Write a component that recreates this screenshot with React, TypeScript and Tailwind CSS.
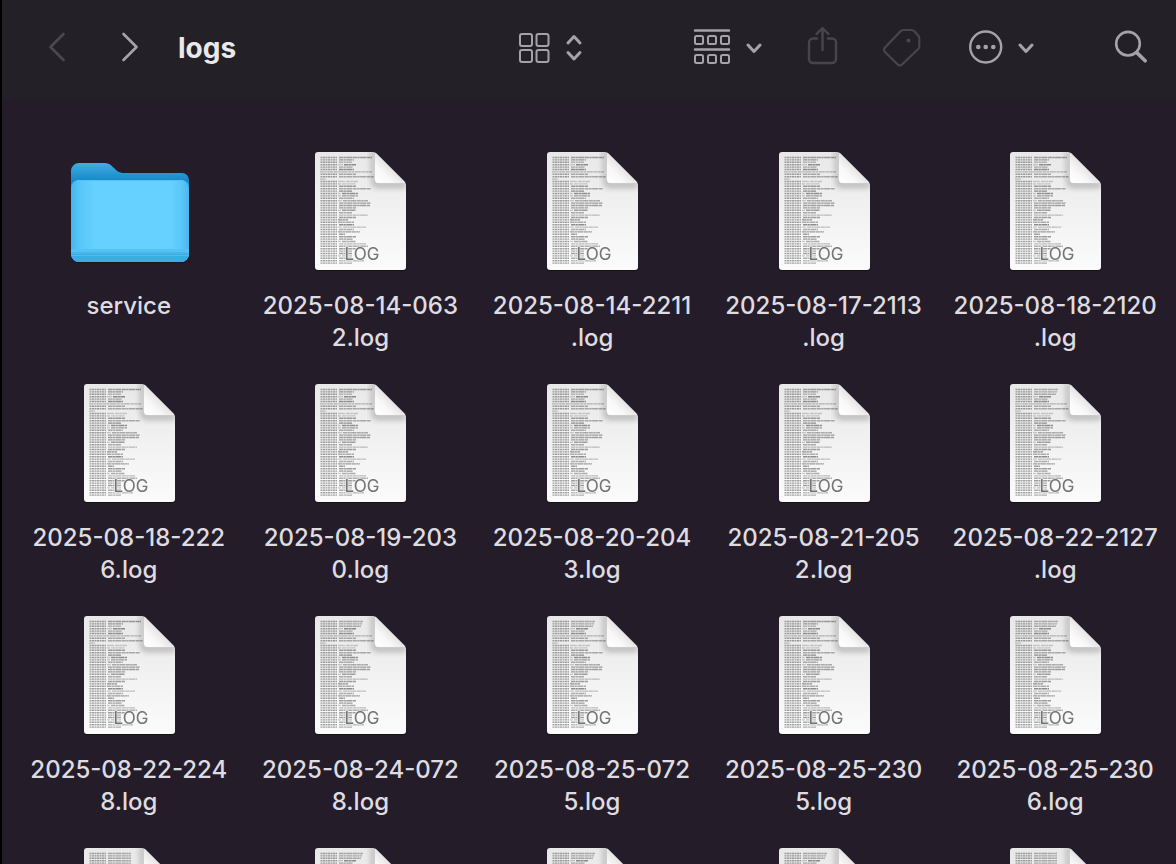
type LogLine = [kind: "stamp" | "wrap", from: number, to: number, tone: number];
type Preview = "default" | "dense" | "block";

interface Entry {
  lines?: string[];
  kind: "folder" | "log";
  preview?: Preview;
}

const entries: Entry[] = [
  { kind: "folder", lines: ["service"] },
  { kind: "log", lines: ["2025-08-14-063", "2.log"] },
  { kind: "log", lines: ["2025-08-14-2211", ".log"] },
  { kind: "log", lines: ["2025-08-17-2113", ".log"] },
  { kind: "log", lines: ["2025-08-18-2120", ".log"] },
  { kind: "log", lines: ["2025-08-18-222", "6.log"] },
  { kind: "log", lines: ["2025-08-19-203", "0.log"] },
  { kind: "log", lines: ["2025-08-20-204", "3.log"] },
  { kind: "log", lines: ["2025-08-21-205", "2.log"] },
  { kind: "log", lines: ["2025-08-22-2127", ".log"], preview: "dense" },
  { kind: "log", lines: ["2025-08-22-224", "8.log"] },
  { kind: "log", lines: ["2025-08-24-072", "8.log"], preview: "dense" },
  { kind: "log", lines: ["2025-08-25-072", "5.log"], preview: "dense" },
  { kind: "log", lines: ["2025-08-25-230", "5.log"] },
  { kind: "log", lines: ["2025-08-25-230", "6.log"], preview: "dense" },
  { kind: "log", preview: "block" },
  { kind: "log", preview: "dense" },
  { kind: "log", preview: "dense" },
  { kind: "log", preview: "dense" },
  { kind: "log", preview: "block" },
];

// One entry per printed line: where the message starts and ends, and how dark it is
const base: LogLine[] = [
  ["stamp", 43, 76, 0.6], ["stamp", 43, 58, 0.6], ["stamp", 43, 56, 0.4], ["stamp", 48, 60, 0.7], ["stamp", 43, 57, 0.5],
  ["stamp", 43, 58, 0.7], ["wrap", 24, 76, 0.4], ["stamp", 43, 60, 0.5], ["stamp", 43, 78, 0.5], ["wrap", 24, 30, 0.4],
  ["stamp", 50, 62, 0.3], ["stamp", 46, 60, 0.3], ["stamp", 43, 60, 0.6], ["stamp", 43, 75, 0.5], ["stamp", 43, 56, 0.7],
  ["stamp", 46, 62, 0.7], ["stamp", 46, 62, 0.6], ["stamp", 43, 58, 0.5], ["stamp", 47, 72, 0.5], ["stamp", 43, 75, 0.6],
  ["stamp", 43, 74, 0.6], ["stamp", 43, 60, 0.6], ["stamp", 46, 60, 0.6], ["stamp", 43, 56, 0.5], ["stamp", 43, 72, 0.4],
  ["stamp", 43, 60, 0.6], ["stamp", 42, 52, 0.7], ["stamp", 42, 58, 0.5], ["stamp", 43, 58, 0.7], ["stamp", 47, 70, 0.4],
  ["stamp", 43, 58, 0.5], ["stamp", 42, 64, 0.6], ["stamp", 43, 49, 0.6], ["stamp", 43, 60, 0.6], ["stamp", 43, 57, 0.6],
  ["stamp", 46, 60, 0.5], ["stamp", 43, 70, 0.4], ["stamp", 43, 72, 0.5], ["stamp", 43, 60, 0.6], ["stamp", 43, 56, 0.5],
  ["stamp", 43, 56, 0.6], ["stamp", 46, 56, 0.4], ["stamp", 43, 56, 0.5], ["stamp", 43, 68, 0.4], ["stamp", 43, 56, 0.5],
];

const previews: Record<Preview, LogLine[]> = {
  default: base,
  dense: base.map((l, i): LogLine => (i < 3 ? ["stamp", 43, 67 - i, 0.5] : l)),
  block: base.map((l, i): LogLine => (i < 8 ? ["stamp", 43, 66, 0.5] : l)),
};

function SharedGradients() {
  return (
    <svg width="0" height="0" className="absolute" aria-hidden="true">
      <defs>
        <linearGradient id="page" x1="0" y1="0" x2="0" y2="1">
          <stop offset="0" stopColor="#e8e8e8" />
          <stop offset="1" stopColor="#fbfbfb" />
        </linearGradient>
        <linearGradient id="fold" gradientUnits="userSpaceOnUse" x1="80" y1="36" x2="96" y2="20">
          <stop offset="0" stopColor="#ffffff" />
          <stop offset="0.5" stopColor="#f8f8f8" />
          <stop offset="1" stopColor="#e0e0e0" />
        </linearGradient>
        <filter id="foldShadow" x="-50%" y="-50%" width="200%" height="200%">
          <feGaussianBlur stdDeviation="3" />
        </filter>
        <clipPath id="pageClip">
          <path d="M22 6H77Q79 6 80.500 7.500L108.500 35.500Q110 37 110 39V121a3 3 0 0 1-3 3H22a3 3 0 0 1-3-3V9a3 3 0 0 1 3-3z" />
        </clipPath>
        <linearGradient id="folderBack" x1="0" y1="0" x2="0" y2="1">
          <stop offset="0" stopColor="#41ade2" />
          <stop offset="0.18" stopColor="#1789c9" />
          <stop offset="1" stopColor="#1789c9" />
        </linearGradient>
        <linearGradient id="folderSide">
          <stop offset="0" stopColor="#45b7ec" />
          <stop offset="0.09" stopColor="#5bc8f9" />
          <stop offset="0.2" stopColor="#66d0ff" />
          <stop offset="0.85" stopColor="#66d0ff" />
          <stop offset="0.94" stopColor="#5ac6f7" />
          <stop offset="1" stopColor="#45b7ec" />
        </linearGradient>
      </defs>
    </svg>
  );
}

function LogIcon({ preview = "default", badge }: { preview?: Preview; badge: boolean }) {
  return (
    <svg viewBox="0 0 128 128" className="h-32 w-32 shrink-0" aria-hidden="true">
      <path d="M22 7H79L110 38V122a3 3 0 0 1-3 3H22a3 3 0 0 1-3-3V10a3 3 0 0 1 3-3z" fill="#000" opacity="0.4" />
      <g clipPath="url(#pageClip)">
        <rect x="19" y="6" width="91" height="118" fill="url(#page)" />
        {previews[preview].map(([kind, from, to, tone], i) => {
          const y = 11.5 + i * 2.4;
          return (
            <g key={i} stroke="#4a4a4a" strokeWidth="1.4">
              {kind === "stamp" && <path d={`M24.5 ${y}H41`} strokeDasharray="2 .5" opacity="0.5" />}
              {kind === "stamp" && from > 44 && <path d={`M42 ${y}H${from - 1}`} opacity="0.25" />}
              <path d={`M${from} ${y}H${to}`} strokeDasharray="4 .4 2.5 .4 6 .5" opacity={tone * 0.85} />
            </g>
          );
        })}
        <path d="M79 2V34a3 3 0 0 0 3 3H114L108 41H81a5 5 0 0 1-5-5V2z" fill="#000" opacity="0.35" filter="url(#foldShadow)" />
        <path d="M79 6V33.500a3.500 3.500 0 0 0 3.500 3.500H110z" fill="url(#fold)" />
      </g>
      {badge && (
        <text x="66" y="114" textAnchor="middle" fontSize="17" fill="#6e6e6e" opacity="0.95" stroke="#f4f4f4" strokeWidth="1" paintOrder="stroke">
          LOG
        </text>
      )}
    </svg>
  );
}

function FolderIcon() {
  return (
    <svg viewBox="0 0 128 128" className="h-32 w-32 shrink-0" aria-hidden="true">
      <path d="M13 19H39c8 0 11 9 19 9H118a7 7 0 0 1 7 7V110a7 7 0 0 1-7 7H13a7 7 0 0 1-7-7V24a7 7 0 0 1 7-7z" fill="#000" opacity="0.3" />
      <path d="M14 17H40c8 0 10 10 18 10H117a7 7 0 0 1 7 7V108a7 7 0 0 1-7 7H14a8 8 0 0 1-8-8V25a8 8 0 0 1 8-8z" fill="url(#folderBack)" />
      <path d="M14 34H116a8 8 0 0 1 8 8V108a8 8 0 0 1-8 8H14a8 8 0 0 1-8-8V42a8 8 0 0 1 8-8z" fill="url(#folderSide)" />
      <path d="M6 103H124v3H6z" fill="#56c2f4" />
      <path d="M6 106H124v2a8 8 0 0 1-8 8H14a8 8 0 0 1-8-8z" fill="#3aaee4" />
      <path d="M6 106H124v2H6z" fill="#47b7eb" />
      <path d="M6.500 109.500H123.500" stroke="#4fbcee" strokeWidth="1" />
      <path d="M12 34.500H118" stroke="#58c2f2" strokeWidth="1" />
    </svg>
  );
}

function FileItem({ entry }: { entry: Entry }) {
  return (
    <li className="flex h-[232px] flex-col items-center gap-4">
      {entry.kind === "folder" ? <FolderIcon /> : <LogIcon preview={entry.preview} badge={!!entry.lines} />}
      {entry.lines && (
        <p className="text-center text-2xl/8 font-medium whitespace-nowrap text-[#dedce0]">
          {entry.lines.map((line) => (
            <span key={line} className="block">{line}</span>
          ))}
        </p>
      )}
    </li>
  );
}

const stroked = { fill: "none", stroke: "currentColor", strokeLinecap: "round", strokeLinejoin: "round", height: 48 } as const;

function Toolbar() {
  return (
    <header className="flex h-[99px] shrink-0 items-start bg-[#232127] pt-6 pr-7 pl-10 text-[#a6a2aa]">
      <button aria-label="Back" className="text-[#4b484f]" disabled>
        <svg {...stroked} width="32" strokeWidth="2.6"><path d="M21.500 10L8.500 23L21.500 36" /></svg>
      </button>
      <button aria-label="Forward" className="ml-10">
        <svg {...stroked} width="32" strokeWidth="2.6"><path d="M9.500 10L22.500 23L9.500 36" /></svg>
      </button>
      <h1 className="ml-8 flex-1 text-[28px]/12 font-bold text-[#e9e8ea]">logs</h1>

      <button aria-label="View as icons">
        <svg {...stroked} width="66" strokeWidth="2">
          <rect x="2" y="10" width="12" height="12" rx="2" />
          <rect x="18.500" y="10" width="12" height="12" rx="2" />
          <rect x="2" y="26" width="12" height="12" rx="2" />
          <rect x="18.500" y="26" width="12" height="12" rx="2" />
          <path d="M50 19L56 12.500L62 19M50 28.500L56 35L62 28.500" strokeWidth="3" />
        </svg>
      </button>
      <button aria-label="Group items" className="ml-27">
        <svg {...stroked} width="70" strokeWidth="2">
          <path d="M3 6.500H37M3 25.500H37" strokeWidth="2.6" />
          {[12, 31].map((y) =>
            [3, 16, 29].map((x) => <rect key={`${x}-${y}`} x={x} y={y} width="8" height="8" rx="1.5" />)
          )}
          <path d="M56 21L62 27.500L68 21" strokeWidth="3" />
        </svg>
      </button>
      <button aria-label="Share" className="ml-11 text-[#48454c]" disabled>
        <svg {...stroked} width="32" strokeWidth="2.4">
          <path d="M11 14.500H7a4 4 0 0 0-4 4V35a4 4 0 0 0 4 4H26a4 4 0 0 0 4-4V18.500a4 4 0 0 0-4-4H22" />
          <path d="M16.500 26V4.500M10.500 10L16.500 4.200L22.500 10" />
        </svg>
      </button>
      <button aria-label="Tags" className="ml-11 text-[#48454c]" disabled>
        <svg {...stroked} width="40" strokeWidth="2.2">
          <path d="M21.500 6H29Q31 6 32.300 7.300L36.200 11.500Q37.300 12.800 37.300 14.500V22Q37.300 24 36 25.300L20 40.500Q17.800 42.500 15.700 40.500L3 28Q1 25.800 3 23.600L18.500 7.300Q19.800 6 21.500 6z" />
          <circle cx="26.500" cy="16.500" r="2" fill="currentColor" stroke="none" />
        </svg>
      </button>
      <button aria-label="More actions" className="ml-11">
        <svg {...stroked} width="68" strokeWidth="2.4">
          <circle cx="19.700" cy="23" r="15.500" />
          <g fill="currentColor" stroke="none">
            <circle cx="12.300" cy="23" r="2.300" />
            <circle cx="19.700" cy="23" r="2.300" />
            <circle cx="27.300" cy="23" r="2.300" />
          </g>
          <path d="M54 21L60 27.500L66 21" strokeWidth="3" />
        </svg>
      </button>
      <button aria-label="Search" className="ml-20">
        <svg {...stroked} width="34" strokeWidth="2.600">
          <circle cx="14" cy="19.700" r="11.800" />
          <path d="M22.800 28.600L31.200 36.800" strokeWidth="3.600" />
        </svg>
      </button>
    </header>
  );
}

export default function App() {
  return (
    <div className="flex h-screen flex-col overflow-hidden border-l-2 border-black bg-[#241d29] font-[Inter,sans-serif]">
      <SharedGradients />
      <Toolbar />
      <main className="min-h-0 flex-1 overflow-hidden pt-[47px] pr-[5px] pl-[11px]">
        <ul className="grid grid-cols-5">
          {entries.map((entry, i) => (
            <FileItem key={i} entry={entry} />
          ))}
        </ul>
      </main>
    </div>
  );
}
